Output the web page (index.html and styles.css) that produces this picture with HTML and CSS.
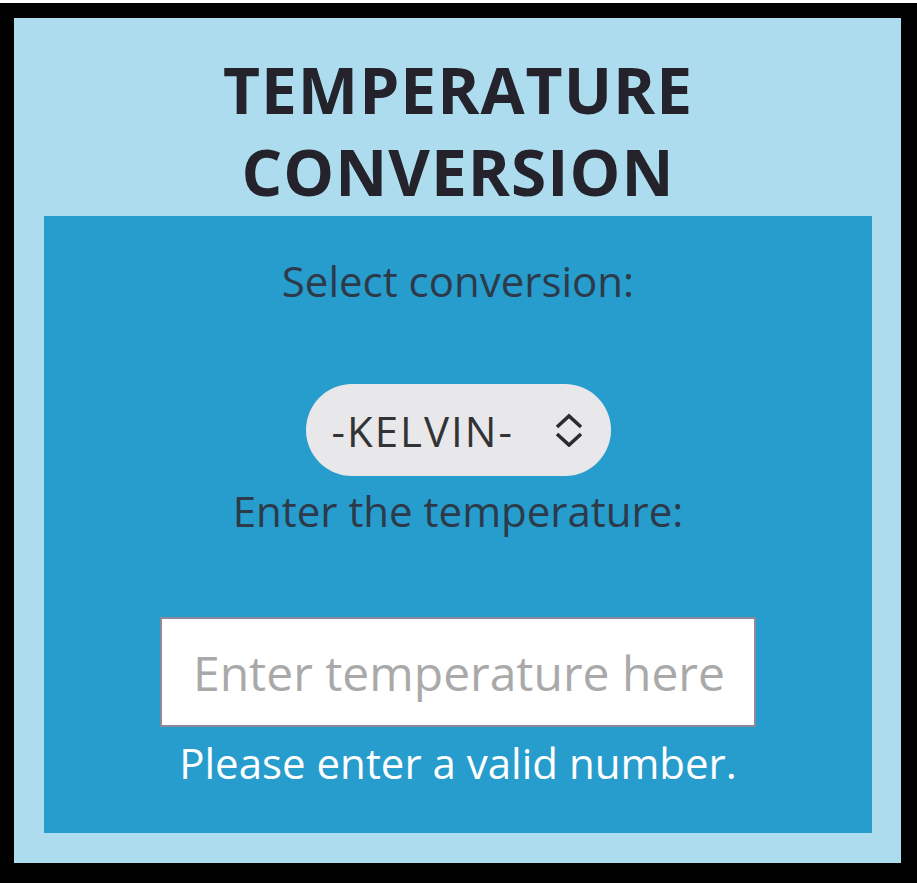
FILE: index.html
```html
<html>
<head>
  <meta charset="utf-8">
  <title>Temperature Conversion</title>
  <link rel="stylesheet" href="styles.css">
</head>
<body>
<div class="frame">
  <h1 class="title">TEMPERATURE CONVERSION</h1>

  <div class="panel">
    <label class="label" for="conversion">Select conversion:</label>

    <div class="picker">
      <select id="conversion" class="picker-select">
        <option>-KELVIN-</option>
        <option>-CELSIUS-</option>
        <option>-FAHRENHEIT-</option>
      </select>
      <svg class="picker-icon" width="30" height="34" viewBox="0 0 30 34">
        <path d="M3 14 L15 3 L27 14" fill="none" stroke="#2b2b30" stroke-width="3.6"/>
        <path d="M3 21 L15 32 L27 21" fill="none" stroke="#2b2b30" stroke-width="3.6"/>
      </svg>
    </div>

    <label class="label label-temp" for="temp">Enter the temperature:</label>

    <input id="temp" class="temp-input" type="text" placeholder="Enter temperature here">

    <p class="error">Please enter a valid number.</p>
  </div>
</div>
</body>
</html>
```

FILE: styles.css
```css
html, body {
  margin: 0;
  background: #000;
  font-family: "Open Sans", "DejaVu Sans", sans-serif;
}
body {
  border-top: 3px solid #fff;
  padding: 15px 16px 20px 14px;
}
.frame {
  background: #addcef;
  padding: 0 29px 30px 30px;
}
.title {
  width: 520px;
  margin: 0 auto;
  padding: 31px 0 3px;
  text-align: center;
  font-size: 64px;
  line-height: 82px;
  font-weight: 700;
  letter-spacing: 1px;
  color: #24232b;
}
.panel {
  background: #279dcd;
  display: flex;
  flex-direction: column;
  align-items: center;
  padding: 36px 0 42px;
}
.label {
  font-size: 42px;
  line-height: 57px;
  color: #2c3a4a;
}
.picker {
  position: relative;
  margin-top: 75px;
}
.picker-select {
  -webkit-appearance: none;
  appearance: none;
  display: block;
  border: none;
  outline: none;
  width: 305px;
  height: 92px;
  border-radius: 46px;
  background: #e8e8ea;
  padding: 0 0 0 26px;
  font-family: "Open Sans", "DejaVu Sans", sans-serif;
  font-size: 42px;
  letter-spacing: 2px;
  color: #333336;
}
.picker-icon {
  position: absolute;
  right: 27px;
  top: 29px;
  pointer-events: none;
}
.label-temp {
  margin-top: 6px;
}
.temp-input {
  margin-top: 78px;
  width: 596px;
  height: 110px;
  box-sizing: border-box;
  border: 2px solid #8f8a9a;
  background: #fff;
  padding: 0 0 0 31px;
  font-family: "Open Sans", "DejaVu Sans", sans-serif;
  font-size: 48px;
  color: #333;
  outline: none;
}
.temp-input::placeholder {
  color: #a9a9a9;
}
.error {
  margin: 7px 0 0;
  font-size: 42px;
  line-height: 57px;
  color: #fff;
}
```
